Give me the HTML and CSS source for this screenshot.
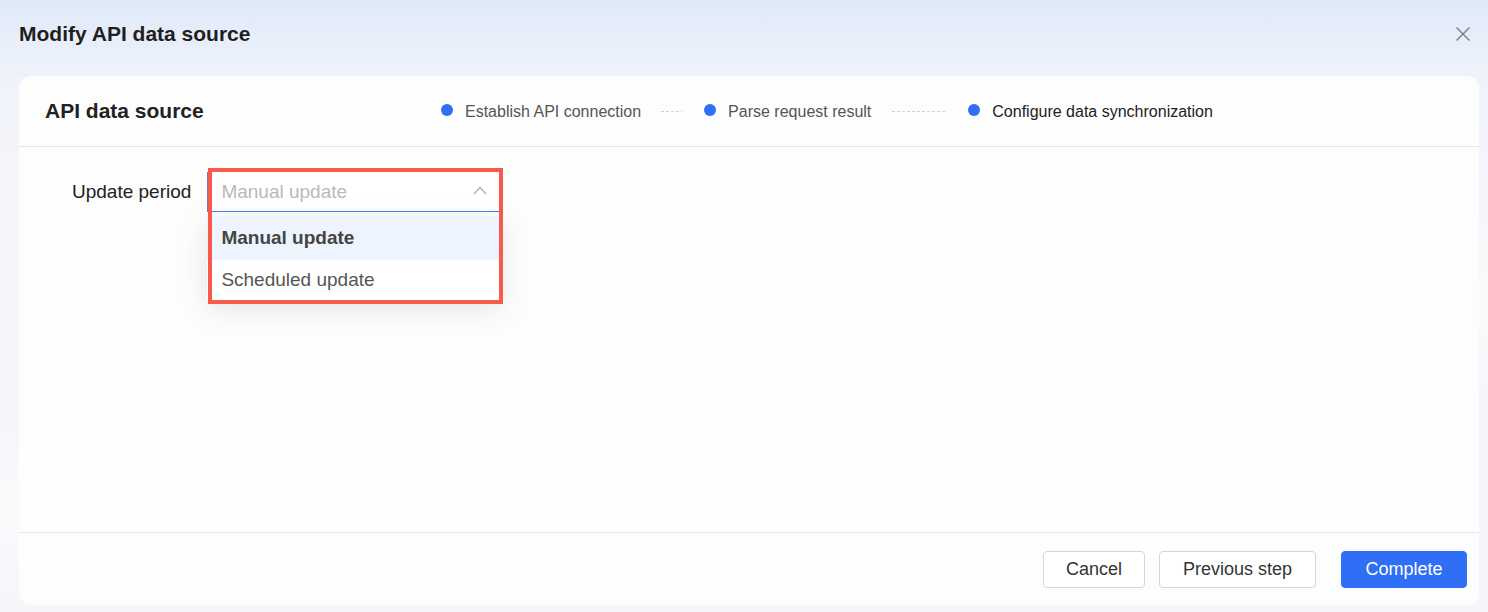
FILE: index.html
```html
<!DOCTYPE html>
<html lang="en">
<head>
<meta charset="utf-8">
<title>Modify API data source</title>
<link rel="stylesheet" href="styles.css">
</head>
<body>
<div class="dialog">
  <div class="topbar">
    <h1 class="dialog-title">Modify API data source</h1>
    <button class="close" aria-label="Close">
      <svg width="16" height="16" viewBox="0 0 16 16"><path d="M1.5 1.5 L14.5 14.5 M14.5 1.5 L1.5 14.5" stroke="#7a7a7a" stroke-width="1.4" fill="none"/></svg>
    </button>
  </div>
  <div class="card">
    <div class="card-header">
      <div class="card-title">API data source</div>
      <div class="steps">
        <div class="step"><span class="dot"></span><span class="step-text">Establish API connection</span></div>
        <span class="dash dash-short"></span>
        <div class="step"><span class="dot"></span><span class="step-text">Parse request result</span></div>
        <span class="dash dash-long"></span>
        <div class="step step-active"><span class="dot"></span><span class="step-text">Configure data synchronization</span></div>
      </div>
    </div>
    <div class="card-body">
      <div class="form-row">
        <label class="form-label">Update period</label>
        <div class="select">
          <div class="select-input">
            <span class="placeholder">Manual update</span>
            <svg class="chevron" width="14" height="9" viewBox="0 0 14 9"><path d="M1 8 L7 1.5 L13 8" stroke="#b0b0b0" stroke-width="1.3" fill="none"/></svg>
          </div>
          <div class="dropdown">
            <div class="option option-selected">Manual update</div>
            <div class="option">Scheduled update</div>
          </div>
          <div class="highlight"></div>
        </div>
      </div>
    </div>
    <div class="card-footer">
      <button class="btn btn-cancel">Cancel</button>
      <button class="btn btn-prev">Previous step</button>
      <button class="btn btn-primary">Complete</button>
    </div>
  </div>
</div>
</body>
</html>
```
FILE: styles.css
```css
* { box-sizing: border-box; }
html, body { margin: 0; padding: 0; }
body {
  width: 1488px;
  height: 612px;
  overflow: hidden;
  font-family: "Liberation Sans", Arial, sans-serif;
  background:
    linear-gradient(172deg, rgba(255,255,255,0) 50%, rgba(255,255,255,0.5) 62%, rgba(255,255,255,0) 75%),
    linear-gradient(180deg, #e0e9f9 0px, #e9effa 45px, #f1f4fb 95px, #f5f6fa 200px, #f5f6fa 100%);
}
.dialog {
  display: flex;
  flex-direction: column;
  height: 612px;
}
.topbar {
  height: 68px;
  display: flex;
  align-items: center;
  justify-content: space-between;
  padding: 0 16px 0 19px;
  flex: 0 0 68px;
}
.dialog-title {
  margin: 0;
  font-size: 21px;
  font-weight: 700;
  color: #1f1f1f;
}
.close {
  border: 0;
  background: transparent;
  padding: 0;
  width: 18px;
  height: 18px;
  display: flex;
  align-items: center;
  justify-content: center;
}
.card {
  margin: 8px 9px 0 19px;
  height: 529px;
  background: #fdfdfe;
  border-radius: 12px;
  display: flex;
  flex-direction: column;
}
.card-header {
  height: 71px;
  flex: 0 0 71px;
  border-bottom: 1px solid #e3e4e8;
  display: flex;
  align-items: center;
  padding-left: 26px;
}
.card-title {
  flex: 0 0 396px;
  font-size: 21px;
  font-weight: 700;
  color: #222;
}
.steps {
  display: flex;
  align-items: center;
  margin-top: 1px;
}
.step {
  display: flex;
  align-items: center;
  gap: 12px;
  font-size: 16px;
  color: #555;
}
.step-active { color: #222; }
.dot {
  width: 12px;
  height: 12px;
  border-radius: 50%;
  background: #2e6ff5;
  margin-top: -4px;
}
.dash {
  height: 1px;
  background: repeating-linear-gradient(90deg, #d2d2d2 0 3px, transparent 3px 5px);
}
.dash-short { width: 21px; margin: 0 22px 0 20px; }
.dash-long { width: 53px; margin: 0 23px 0 21px; }

.card-body {
  flex: 1;
  padding: 25px 0 0 53px;
}
.form-row {
  display: flex;
  align-items: center;
}
.form-label {
  font-size: 19px;
  color: #222;
  margin-right: 16px;
  line-height: 40px;
}
.select {
  position: relative;
  width: 294px;
}
.select-input {
  height: 40px;
  border-left: 2px solid #7d6fd8;
  border-bottom: 1px solid #3c7ef6;
  display: flex;
  align-items: center;
  justify-content: space-between;
  padding: 1px 14px 0 12px;
  background: #fff;
}
.placeholder {
  font-size: 19px;
  color: #b9b9b9;
}
.chevron { margin-top: -3px; }
.dropdown {
  position: absolute;
  left: 0;
  top: 44px;
  width: 294px;
  background: #fff;
  box-shadow: 0 8px 30px rgba(0,0,0,0.10);
}
.option {
  height: 40px;
  display: flex;
  align-items: center;
  padding-left: 14px;
  font-size: 19px;
  color: #555;
}
.option-selected {
  height: 44px;
  background: #edf4fe;
  font-weight: 700;
  color: #444;
}
.highlight {
  position: absolute;
  left: 1px;
  top: -4px;
  width: 295px;
  height: 136px;
  border: 4.5px solid #f8594d;
  pointer-events: none;
}

.card-footer {
  flex: 0 0 73px;
  border-top: 1px solid #e3e4e8;
  display: flex;
  align-items: center;
  justify-content: flex-end;
  padding-right: 12px;
}
.btn {
  height: 37px;
  border-radius: 4px;
  border: 1px solid #d6d6d6;
  background: #fff;
  font-family: "Liberation Sans", Arial, sans-serif;
  font-size: 18px;
  color: #333;
  padding: 0;
}
.btn-cancel { width: 102px; }
.btn-prev { width: 157px; margin-left: 14px; }
.btn-primary {
  width: 126px;
  margin-left: 25px;
  background: #2f6ff6;
  border-color: #2f6ff6;
  color: #fff;
}
```
